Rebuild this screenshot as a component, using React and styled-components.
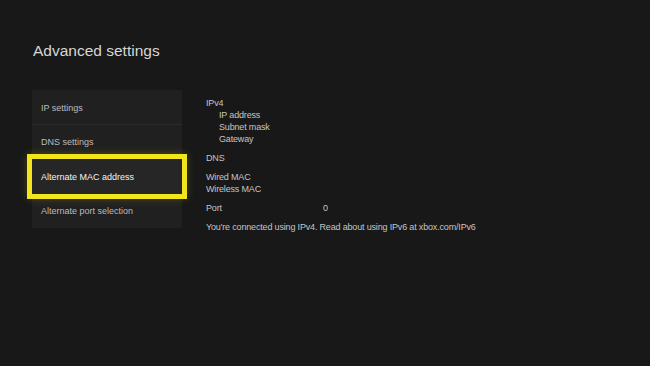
import React from "react";
import styled, { createGlobalStyle } from "styled-components";

const GlobalStyle = createGlobalStyle`
  html, body {
    margin: 0;
    padding: 0;
    background: #181818;
  }
  body {
    width: 650px;
    height: 366px;
    overflow: hidden;
    font-family: "Liberation Sans", Arial, sans-serif;
  }
`;

const Page = styled.div`
  width: 650px;
  height: 366px;
  background: #181818;
  padding: 41px 0 0 33px;
  box-sizing: border-box;
`;

const Title = styled.h1`
  margin: 0;
  font-size: 15.5px;
  line-height: 20px;
  font-weight: 400;
  color: #d6d6d6;
`;

const Main = styled.div`
  display: flex;
  align-items: flex-start;
  gap: 24px;
  margin-top: 29px;
  margin-left: -1px;
`;

const Menu = styled.ul`
  list-style: none;
  margin: 0;
  padding: 0;
  width: 150px;
  background: #202020;
`;

const MenuItem = styled.li`
  height: 34.5px;
  display: flex;
  align-items: center;
  padding: 2px 0 0 9px;
  font-size: 9px;
  color: ${({ $active }) => ($active ? "#f4f4f4" : "#bcbcbc")};
  background: ${({ $active }) => ($active ? "#262627" : "transparent")};
  border-bottom: 1px solid ${({ $line }) => ($line ? "#2c2c2c" : "transparent")};
  box-sizing: border-box;
  position: relative;
  outline: ${({ $active }) => ($active ? "5px solid #f3e51b" : "none")};
  box-shadow: ${({ $active }) => ($active ? "0 0 9px 4px rgba(243, 229, 27, 0.25)" : "none")};
  z-index: ${({ $active }) => ($active ? 1 : 0)};
`;

const Details = styled.div`
  padding-top: 7px;
  display: flex;
  flex-direction: column;
  gap: 7px;
  font-size: 9px;
  line-height: 12px;
  letter-spacing: -0.17px;
  color: #c4c4c4;
`;

const Group = styled.div`
  display: flex;
  flex-direction: column;
`;

const Row = styled.div`
  display: grid;
  grid-template-columns: 117px auto;
  padding-left: ${({ $indent }) => ($indent ? "13px" : "0")};
`;

const Note = styled.div`
  white-space: nowrap;
`;

const menu = [
  { label: "IP settings", line: true },
  { label: "DNS settings" },
  { label: "Alternate MAC address", active: true },
  { label: "Alternate port selection" },
];

export default function App() {
  return (
    <>
      <GlobalStyle />
      <Page>
        <Title>Advanced settings</Title>
        <Main>
          <Menu>
            {menu.map((m) => (
              <MenuItem key={m.label} $active={m.active} $line={m.line}>
                {m.label}
              </MenuItem>
            ))}
          </Menu>
          <Details>
            <Group>
              <Row>IPv4</Row>
              <Row $indent>IP address</Row>
              <Row $indent>Subnet mask</Row>
              <Row $indent>Gateway</Row>
            </Group>
            <Group>
              <Row>DNS</Row>
            </Group>
            <Group>
              <Row>Wired MAC</Row>
              <Row>Wireless MAC</Row>
            </Group>
            <Group>
              <Row>
                <span>Port</span>
                <span>0</span>
              </Row>
            </Group>
            <Note>You're connected using IPv4. Read about using IPv6 at xbox.com/IPv6</Note>
          </Details>
        </Main>
      </Page>
    </>
  );
}
